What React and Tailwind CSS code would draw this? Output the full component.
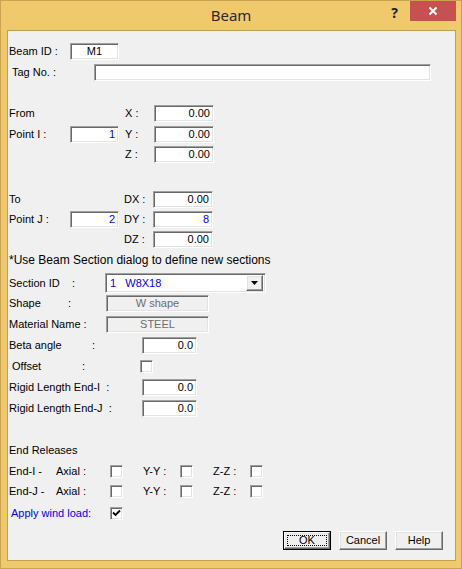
import React from "react"

const sunken =
  "border border-t-[#a0a0a0] border-l-[#a0a0a0] border-r-white border-b-white shadow-[inset_1px_1px_0_#696969,inset_-1px_-1px_0_#e3e3e3]"
const raised =
  "border border-t-white border-l-white border-r-[#696969] border-b-[#696969] shadow-[inset_-1px_-1px_0_#a0a0a0,inset_1px_1px_0_#e3e3e3]"

const Field = ({ value = "", w, blue, center, disabled }) => (
  <div
    className={`${sunken} h-[17px] flex items-center px-[3px] leading-none ${w} ${
      disabled ? "bg-[#f0f0f0] text-[#6d6d6d] justify-center" : "bg-white"
    } ${center ? "justify-center" : disabled ? "" : "justify-end"} ${blue ? "text-[#0000ff]" : ""}`}
  >
    {value}
  </div>
)

const Check = ({ checked }) => (
  <div className={`${sunken} w-[13px] h-[13px] bg-white flex items-center justify-center shrink-0`}>
    {checked && (
      <svg width="9" height="9" viewBox="0 0 9 9">
        <path d="M1 3.5 L3.5 6 L8 1.5" fill="none" stroke="#000" strokeWidth="1.8" />
      </svg>
    )}
  </div>
)

const Btn = ({ children, isDefault }) => (
  <div className={`w-[48px] h-[19px] ${isDefault ? "border border-black" : ""}`}>
    <div className={`${raised} h-full bg-[#f0f0f0] flex items-stretch leading-none`}>
      {isDefault ? (
        <span className="flex-1 m-[2px] border border-dotted border-black flex items-center justify-center">
          {children}
        </span>
      ) : (
        <span className="flex-1 flex items-center justify-center">{children}</span>
      )}
    </div>
  </div>
)

const CoordRow = ({ left, axis, value, blue, className = "" }) => (
  <div className={`flex items-center h-[17px] ${className}`}>
    {left}
    <div className="w-[29px]">{axis} :</div>
    <Field value={value} w="w-[60px]" blue={blue} />
  </div>
)

export default function App() {
  return (
    <div className="w-[462px] h-[569px] bg-[#f0c96c] border border-[#c9a350] flex flex-col font-['Liberation_Sans',Arial,sans-serif] text-[11px] text-black">
      {/* Title bar */}
      <div className="relative h-[29px] flex items-start justify-end shrink-0">
        <div className="absolute inset-x-0 top-0 h-[29px] flex items-center justify-center font-['Noto_Sans',sans-serif] text-[15px] text-[#2b2b2b]">
          Beam
        </div>
        <div className="relative mt-[5px] mr-[12px] font-['Noto_Sans',sans-serif] font-bold text-[14px] leading-none text-[#222]">
          ?
        </div>
        <div className="relative w-[46px] h-[20px] mr-[5px] bg-[#c75050] flex items-center justify-center">
          <svg width="10" height="10" viewBox="0 0 10 10">
            <path d="M1.5 1.5 L8.5 8.5 M8.5 1.5 L1.5 8.5" stroke="#fff" strokeWidth="2" />
          </svg>
        </div>
      </div>

      {/* Client area */}
      <div className="ml-[6px] w-[449px] h-[531px] border border-[#c3a050] bg-[#f0f0f0] flex flex-col pl-[1px]">
        <div className="flex items-center h-[17px] mt-[12px]">
          <div className="w-[61px]">Beam ID :</div>
          <Field value="M1" w="w-[49px]" center />
        </div>
        <div className="flex items-center h-[17px] mt-[4px]">
          <div className="w-[82px] ml-[3px]">Tag No. :</div>
          <Field w="w-[337px]" />
        </div>

        <CoordRow className="mt-[24px]" left={<div className="w-[116px]">From</div>} axis="X" value="0.00" />
        <CoordRow
          className="mt-[4px]"
          left={
            <>
              <div className="w-[61px]">Point I :</div>
              <Field value="1" w="w-[49px]" blue />
              <div className="w-[6px]" />
            </>
          }
          axis="Y"
          value="0.00"
        />
        <CoordRow className="mt-[3px]" left={<div className="w-[116px]" />} axis="Z" value="0.00" />

        <CoordRow className="mt-[28px]" left={<div className="w-[115px]">To</div>} axis="DX" value="0.00" />
        <CoordRow
          className="mt-[3px]"
          left={
            <>
              <div className="w-[61px]">Point J :</div>
              <Field value="2" w="w-[49px]" blue />
              <div className="w-[5px]" />
            </>
          }
          axis="DY"
          value="8"
          blue
        />
        <CoordRow className="mt-[3px]" left={<div className="w-[115px]" />} axis="DZ" value="0.00" />

        <div className="h-[14px] mt-[5px] flex items-center text-[12px]">
          *Use Beam Section dialog to define new sections
        </div>

        <div className="flex items-center h-[20px] mt-[6px]">
          <div className="w-[63px]">Section ID</div>
          <div className="w-[33px]">:</div>
          <div className={`${sunken} w-[161px] h-[20px] bg-white flex items-center pl-[4px] pr-[2px]`}>
            <span className="flex-1 text-[#0000ff] whitespace-pre">1   W8X18</span>
            <div className={`${raised} w-[17px] h-[16px] bg-[#f0f0f0] flex items-center justify-center`}>
              <svg width="7" height="4" viewBox="0 0 7 4">
                <path d="M0 0 H7 L3.5 4 Z" fill="#000" />
              </svg>
            </div>
          </div>
        </div>
        <div className="flex items-center h-[17px] mt-[2px]">
          <div className="w-[59px]">Shape</div>
          <div className="w-[38px]">:</div>
          <Field value="W shape" w="w-[103px]" disabled />
        </div>
        <div className="flex items-center h-[17px] mt-[4px]">
          <div className="w-[97px]">Material Name :</div>
          <Field value="STEEL" w="w-[103px]" disabled />
        </div>
        <div className="flex items-center h-[17px] mt-[4px]">
          <div className="w-[83px]">Beta angle</div>
          <div className="w-[50px]">:</div>
          <Field value="0.0" w="w-[55px]" />
        </div>
        <div className="flex items-center h-[17px] mt-[4px]">
          <div className="w-[70px] ml-[3px]">Offset</div>
          <div className="w-[58px]">:</div>
          <Check />
        </div>
        <div className="flex items-center h-[17px] mt-[4px]">
          <div className="w-[133px] whitespace-pre">Rigid Length End-I  :</div>
          <Field value="0.0" w="w-[55px]" />
        </div>
        <div className="flex items-center h-[17px] mt-[4px]">
          <div className="w-[133px] whitespace-pre">Rigid Length End-J  :</div>
          <Field value="0.0" w="w-[55px]" />
        </div>

        <div className="h-[14px] mt-[26px] flex items-center">End Releases</div>
        {["End-I -", "End-J -"].map((end, i) => (
          <div key={end} className={`flex items-center h-[14px] ${i === 0 ? "mt-[7px]" : "mt-[6px]"}`}>
            <div className="w-[47px]">{end}</div>
            <div className="w-[54px]">Axial :</div>
            <Check />
            <div className="w-[20px]" />
            <div className="w-[37px]">Y-Y :</div>
            <Check />
            <div className="w-[20px]" />
            <div className="w-[37px]">Z-Z :</div>
            <Check />
          </div>
        ))}
        <div className="flex items-center h-[14px] mt-[8px]">
          <div className="w-[99px] ml-[2px] text-[#0000ff]">Apply wind load:</div>
          <Check checked />
        </div>

        <div className="flex justify-end gap-[8px] mt-[11px] pr-[12px]">
          <Btn isDefault>OK</Btn>
          <Btn>Cancel</Btn>
          <Btn>Help</Btn>
        </div>
      </div>
    </div>
  )
}
